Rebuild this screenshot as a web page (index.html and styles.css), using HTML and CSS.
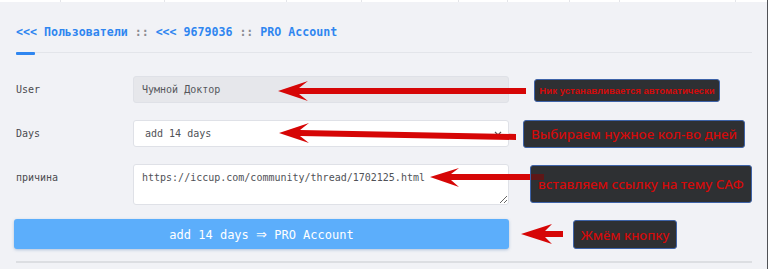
FILE: index.html
```html
<!DOCTYPE HTML>
<html lang="ru">
<head>
    <meta charset=UTF-8>
    <title>PRO Account</title>
    <link rel="stylesheet" href="styles.css">
</head>
<body>

<div class="page">

    <!-- край таблицы сверху -->
    <div class="top-strip">
        <span style="width: 61px"></span>
        <span style="width: 104px"></span>
        <span style="width: 122px"></span>
        <span style="width: 75px"></span>
        <span style="width: 97px"></span>
        <span style="width: 49px"></span>
        <span style="width: 62px"></span>
        <span style="width: 50px"></span>
        <span style="width: 116px"></span>
    </div>

    <div class="content">

        <div class="crumbs"><a href="#">&lt;&lt;&lt; Пользователи</a> <span class="sep">::</span> <a href="#">&lt;&lt;&lt; 9679036</a> <span class="sep">::</span> <a href="#">PRO Account</a></div>
        <div class="tab-line"><div class="tab-mark"></div></div>

        <form class="pro-form">
            <div class="row row-user">
                <label class="word" for="user">User</label>
                <input class="inp" type="text" id="user" value="Чумной Доктор" disabled>
            </div>
            <div class="row row-days">
                <label class="word">Days</label>
                <div class="inp select">
                    <span>add 14 days</span>
                    <svg width="8" height="5" viewBox="0 0 8 5">
                        <path d="M1 1 L4 4 L7 1" fill="none" stroke="#555" stroke-width="1.2"/>
                    </svg>
                </div>
            </div>
            <div class="row row-reason">
                <label class="word" for="reason">причина</label>
                <textarea class="inp" id="reason">https://iccup.com/community/thread/1702125.html</textarea>
            </div>
            <button type="button" class="submit">add 14 days <span class="arrow">&rArr;</span> PRO Account</button>
        </form>

        <div class="bottom-line"></div>
    </div>

    <!-- подсказки поверх скриншота -->
    <svg class="arrows" width="768" height="269" viewBox="0 0 768 269">
        <polygon points="278,91 308,81 299,88 526,88 526,94 299,94 308,101"/>
        <polygon points="279,133 309,123 300,130 516,134 516,140 300,136 309,143"/>
        <polygon points="430,177 459,168 451,174 531,174 531,180 451,180 459,187"/>
        <polygon points="521,234 552,224 545,231 563,231 563,237 545,237 552,244"/>
    </svg>

    <div class="note note-1">Ник устанавливается автоматически</div>
    <div class="note note-2">Выбираем нужное кол-во дней</div>
    <div class="note note-3">вставляем ссылку на тему САФ</div>
    <div class="note note-4">Жмём кнопку</div>

    <!-- хвост стрелки просвечивает сквозь плашку -->
    <div class="arrow-tail"></div>

</div>

</body>
</html>
```

FILE: styles.css
```css
body {
    margin: 0;
    background-color: #f1f2f6;
}

.page {
    position: relative;
    width: 767px;
    height: 269px;
    border-right: 1px solid #505256;
    background-color: #f1f2f6;
    overflow: hidden;
}

.top-strip {
    display: flex;
    height: 2px;
    background-color: #ffffff;
}

.top-strip span {
    box-sizing: border-box;
    height: 2px;
    border-right: 1px solid #e4e5e9;
}

.content {
    padding: 0 15px 0 16px;
}

.crumbs {
    margin-top: 22px;
    height: 16px;
    line-height: 16px;
    font-family: "DejaVu Sans Mono", "Liberation Mono", monospace;
    font-size: 11.6px;
    font-weight: bold;
    color: #2f86f0;
    white-space: nowrap;
}

.crumbs a {
    color: #2f86f0;
    text-decoration: none;
}

.crumbs .sep {
    color: #8a8d93;
}

.tab-line {
    margin-top: 13px;
    height: 1px;
    background-color: #e3e5ea;
}

.tab-mark {
    width: 19px;
    height: 3px;
    margin-top: -1px;
    border-radius: 1px;
    background-color: #2f86f0;
}

.pro-form {
    margin: 23px 0 0 0;
}

.row {
    display: flex;
    align-items: center;
}

.word {
    width: 117px;
    font-family: "DejaVu Sans Mono", monospace;
    font-size: 10px;
    color: #4a4b4f;
}

.inp {
    box-sizing: border-box;
    width: 376px;
    margin: 0;
    border: 1px solid #dfe1e7;
    border-radius: 3px;
    background-color: #ffffff;
    font-family: "DejaVu Sans Mono", monospace;
    font-size: 10px;
    color: #505257;
    outline: none;
}

.row-user .inp {
    height: 27px;
    padding: 0 8px;
    background-color: #e6e7eb;
    color: #55575c;
}

.row-days {
    margin-top: 17px;
}

.select {
    display: flex;
    align-items: center;
    justify-content: space-between;
    height: 27px;
    padding: 0 6px 0 11px;
}

.row-reason {
    margin-top: 17px;
    align-items: flex-start;
}

.row-reason .word {
    margin-top: 8px;
}

.row-reason .inp {
    display: block;
    height: 41px;
    padding: 6px 8px;
    resize: vertical;
    line-height: 14px;
}

.submit {
    display: block;
    box-sizing: border-box;
    width: 495px;
    height: 30px;
    margin: 14px 0 0 -2px;
    border: none;
    border-radius: 3px;
    background-color: #5caefb;
    box-shadow: 0 1px 3px rgba(60, 110, 170, 0.35);
    font-family: "DejaVu Sans Mono", monospace;
    font-size: 12px;
    color: #ffffff;
}

.submit .arrow {
    font-family: "DejaVu Sans", sans-serif;
    font-size: 13px;
}

.bottom-line {
    margin-top: 12px;
    height: 2px;
    background-color: #dcdee2;
}

/* стрелки и надписи */

.arrows {
    position: absolute;
    top: 0;
    left: 0;
    fill: #d60606;
}

.note {
    position: absolute;
    display: flex;
    align-items: center;
    justify-content: center;
    box-sizing: border-box;
    border: 1px solid #3e63a8;
    border-radius: 3px;
    background-color: #2e3033;
    color: #d40a0a;
    font-family: "Noto Sans", "Liberation Sans", sans-serif;
    font-weight: 500;
    white-space: nowrap;
}

.note-1 {
    left: 534px;
    top: 79px;
    width: 186px;
    height: 23px;
    font-family: "Liberation Sans", sans-serif;
    font-size: 9.6px;
    font-weight: bold;
}

.note-2 {
    left: 523px;
    top: 120px;
    width: 222px;
    height: 28px;
    font-size: 13.4px;
}

.note-3 {
    left: 530px;
    top: 165px;
    width: 222px;
    height: 38px;
    font-size: 13.4px;
    padding-top: 0;
}

.note-4 {
    left: 573px;
    top: 220px;
    width: 104px;
    height: 29px;
    font-size: 13px;
}

.arrow-tail {
    position: absolute;
    left: 531px;
    top: 174px;
    width: 13px;
    height: 6px;
    background-color: #5e1717;
}
```
